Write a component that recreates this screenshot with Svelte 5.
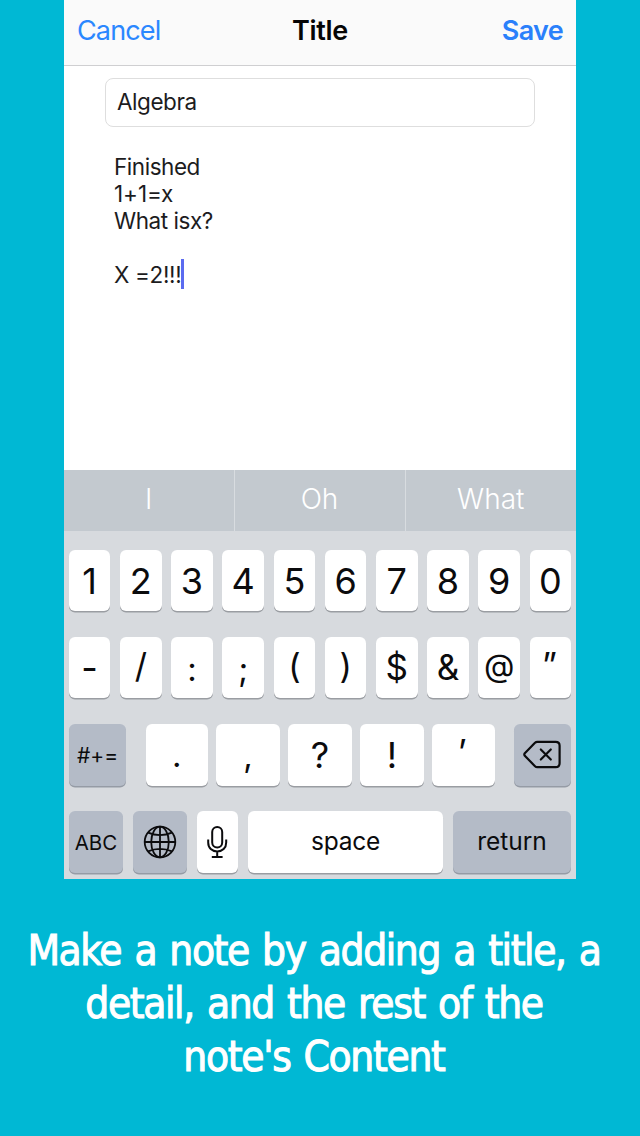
<script>
  const suggestions = ['I', 'Oh', 'What'];
  const digits = ['1', '2', '3', '4', '5', '6', '7', '8', '9', '0'];
  const symbols = ['-', '/', ':', ';', '(', ')', '$', '&', '@', '”'];
  const marks = ['.', ',', '?', '!', '’'];
  const note = ['Finished', '1+1=x', 'What isx?', '', 'X =2!!!'];
</script>

<main>
  <section class="phone">
    <header>
      <span class="cancel">Cancel</span>
      <span class="title">Title</span>
      <span class="save">Save</span>
    </header>

    <div class="editor">
      <div class="field"><span>Algebra</span></div>
      <div class="note">
        {#each note as line, i}
          <div class="line l{i}"><span>{line}</span>{#if i === note.length - 1}<i class="caret"></i>{/if}</div>
        {/each}
      </div>
    </div>

    <div class="suggestions">
      {#each suggestions as word}
        <div><span>{word}</span></div>
      {/each}
    </div>

    <div class="keyboard">
      <div class="row ten">
        {#each digits as key}<div class="key"><span>{key}</span></div>{/each}
      </div>
      <div class="row ten symbols">
        {#each symbols as key, i}<div class="key s{i}"><span>{key}</span></div>{/each}
      </div>
      <div class="row third">
        <div class="key dark more"><span>#+=</span></div>
        <div class="marks">
          {#each marks as key, i}<div class="key m{i}"><span>{key}</span></div>{/each}
        </div>
        <div class="key dark">
          <svg width="38" height="30" viewBox="0 0 38 30" fill="none" stroke="#0b0b0d" stroke-width="2.2" stroke-linejoin="round" stroke-linecap="round">
            <path d="M14.2 1.8H32.7Q36.6 1.8 36.6 5.7V23.3Q36.6 27.2 32.7 27.2H14.2Q13 27.2 12 26.2L1.8 15.8Q.8 14.5 1.8 13.2L12 2.8Q13 1.8 14.2 1.8Z" />
            <path d="M17.8 9.5L27.8 19.5M27.8 9.5L17.8 19.5" />
          </svg>
        </div>
      </div>
      <div class="row fourth">
        <div class="key dark abc"><span>ABC</span></div>
        <div class="key dark">
          <svg width="34" height="34" viewBox="0 0 34 34" fill="none" stroke="#0b0b0d" stroke-width="1.8">
            <circle cx="17" cy="17" r="15.3" />
            <ellipse cx="17" cy="17" rx="8.8" ry="15.3" />
            <path d="M17 1.6V32.4M1.6 17H32.4M5 7.6Q17 12.6 29 7.6M5 26.4Q17 21.4 29 26.4" />
          </svg>
        </div>
        <div class="key mic">
          <svg width="22" height="34" viewBox="0 0 22 34" fill="none" stroke="#0b0b0d" stroke-width="2">
            <rect x="6.2" y="2" width="10" height="20.6" rx="5" />
            <path d="M2.2 14.5V17.4C2.2 23 6 26.4 11.2 26.4S20.2 23 20.2 17.4V14.5M11.2 26.4V31.6M5.8 32H16.6" />
          </svg>
        </div>
        <div class="key word space"><span>space</span></div>
        <div class="key dark word return"><span>return</span></div>
      </div>
    </div>
  </section>

  <div class="caption">
    <div class="c1">Make a note by adding a title, a</div>
    <div class="c2">detail, and the rest of the</div>
    <div class="c3">note's Content</div>
  </div>
</main>

<style>
  :global(body) { background: #00b8d4; }
  main {
    width: 640px; height: 1136px; overflow: hidden;
    background: #00b8d4; color: #0b0b0d;
    font-family: Inter, "Liberation Sans", sans-serif;
    display: flex; flex-direction: column; align-items: center;
  }
  span { display: inline-block; white-space: pre; }
  .phone {
    width: 512px; height: 879px; background: #fff;
    display: flex; flex-direction: column;
  }
  header {
    box-sizing: border-box; height: 66px; flex: none;
    display: grid; grid-template-columns: 1fr auto 1fr; align-items: center;
    padding: 0 13px 3px; background: #fafafa; border-bottom: 1px solid #cfcfd1;
    font-size: 27px; line-height: 32px;
  }
  .cancel { color: #2a87ff; letter-spacing: -0.85px; }
  .title { color: #050505; font-weight: 600; letter-spacing: -0.3px; }
  .save { color: #2a80fb; font-weight: 600; letter-spacing: -0.7px; justify-self: end; }

  .editor { flex: 1; padding: 12px 41px 0; }
  .field {
    box-sizing: border-box; height: 49px; width: 430px;
    border: 1px solid #dedede; border-radius: 8px;
    padding: 8px 11px; font-size: 22.5px; line-height: 29px; color: #1c1c1e; letter-spacing: -0.45px;
  }
  .note { padding: 26px 9px 0; font-size: 22.5px; color: #1c1c1e; letter-spacing: -0.45px; }
  .line { height: 27px; line-height: 27px; display: flex; align-items: center; }
  .l1 { letter-spacing: -0.05px; }
  .l4 { letter-spacing: -0.35px; }
  .caret { width: 3px; height: 30px; background: #5b6bf0; flex: none; margin-top: -2px; }

  .suggestions {
    height: 61px; flex: none; display: grid; grid-template-columns: 169.5px 171px 171.5px;
    background: #c3c9cf; color: #fff; font-size: 28px; font-weight: 350;
  }
  .suggestions div { display: flex; justify-content: center; padding-top: 12px; line-height: 34px; }
  .suggestions div + div { border-left: 1.5px solid #d8dce0; }

  .keyboard {
    box-sizing: border-box; height: 348px; flex: none; background: #d7dade;
    padding: 18.5px 4.8px 0; display: flex; flex-direction: column; gap: 25.5px;
  }
  .row { display: grid; height: 61.7px; }
  .ten { grid-template-columns: repeat(10, 1fr); gap: 9.6px; }
  .third { grid-template-columns: 57.5px 349px 57.5px; justify-content: space-between; }
  .marks { display: grid; grid-template-columns: 62.5px 64px 64px 64px 62.5px; justify-content: space-between; }
  .fourth { grid-template-columns: 54.4px 54.4px 41.6px 195.2px 118.4px; justify-content: space-between; }
  .key {
    box-sizing: border-box; background: #fff; border-radius: 6px; box-shadow: 0 1.5px 0 #9a9da2;
    display: flex; align-items: center; justify-content: center;
    font-size: 36px; line-height: 44px; min-width: 0; padding-top: 1px;
  }
  .symbols .key { font-size: 34px; padding: 0 0 3px; }
  .symbols .s0 { font-size: 36px; padding: 1px 0 0; }
  .symbols .s2, .symbols .s3 { font-size: 33px; padding: 2px 0 0; }
  .symbols .s6, .symbols .s7 { font-size: 35px; padding-bottom: 1px; }
  .symbols .s8 { font-size: 31.5px; padding-bottom: 3px; }
  .symbols .s9 { font-size: 34px; padding: 0 2px 6px 0; }
  .m0, .m1 { font-size: 33px; padding-bottom: 0; }
  .m4 { font-size: 34px; padding: 0 2px 6px 0; }
  .dark { background: #b4bbc7; box-shadow: 0 1.5px 0 #959ba5; }
  .more { font-size: 21px; padding-top: 2px; }
  .abc { font-size: 20.5px; padding-top: 2px; }
  .mic { padding-right: 2px; }
  .word { font-size: 24.5px; padding: 0 0 1px; }
  .space { letter-spacing: -0.2px; }

  .caption {
    box-sizing: border-box; margin-top: 45px; width: 640px; padding-right: 12px; text-align: center; color: #fff;
    font-family: "DejaVu Sans Condensed", "DejaVu Sans", sans-serif; font-stretch: condensed;
    font-size: 42px; line-height: 53px; white-space: nowrap; -webkit-text-stroke: 1px #fff;
  }
  .c1, .c2 { letter-spacing: -1.4px; word-spacing: 2.6px; }
  .c3 { letter-spacing: -1.3px; word-spacing: 2px; }
</style>
